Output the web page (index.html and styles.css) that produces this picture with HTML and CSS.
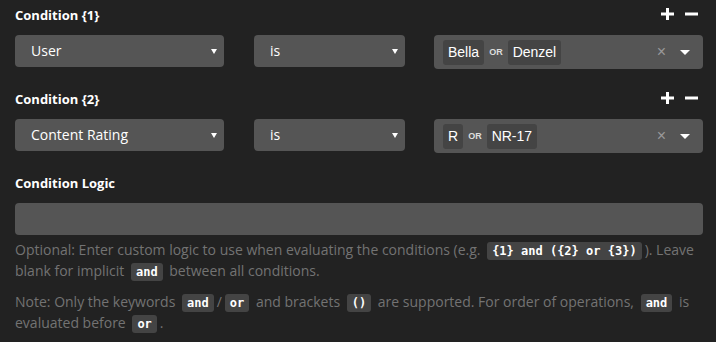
FILE: index.html
```html
<!DOCTYPE html>
<html lang="en">
<head>
    <meta charset="UTF-8">
    <title>Notification Conditions</title>
    <link rel="stylesheet" href="styles.css">
</head>
<body>
    <div class="conditions">
        <div class="condition">
            <div class="condition-header">
                <label>Condition {1}</label>
                <div class="condition-actions">
                    <svg class="icon" viewBox="0 0 13 12"><path d="M5 0h3v4.5h5v3H8V12H5V7.5H0v-3h5z"/></svg>
                    <svg class="icon" viewBox="0 0 13 12"><path d="M0 4.5h13v3H0z"/></svg>
                </div>
            </div>
            <div class="condition-fields">
                <div class="select-box">User<span class="caret"></span></div>
                <div class="select-box">is<span class="caret"></span></div>
                <div class="multi-select">
                    <span class="token">Bella</span>
                    <span class="token-or">OR</span>
                    <span class="token">Denzel</span>
                    <span class="clear">&times;</span>
                    <span class="arrow"></span>
                </div>
            </div>
        </div>
        <div class="condition">
            <div class="condition-header">
                <label>Condition {2}</label>
                <div class="condition-actions">
                    <svg class="icon" viewBox="0 0 13 12"><path d="M5 0h3v4.5h5v3H8V12H5V7.5H0v-3h5z"/></svg>
                    <svg class="icon" viewBox="0 0 13 12"><path d="M0 4.5h13v3H0z"/></svg>
                </div>
            </div>
            <div class="condition-fields">
                <div class="select-box">Content Rating<span class="caret"></span></div>
                <div class="select-box">is<span class="caret"></span></div>
                <div class="multi-select">
                    <span class="token">R</span>
                    <span class="token-or">OR</span>
                    <span class="token">NR-17</span>
                    <span class="clear">&times;</span>
                    <span class="arrow"></span>
                </div>
            </div>
        </div>
        <div class="logic">
            <div class="condition-header">
                <label>Condition Logic</label>
            </div>
            <div class="text-input"></div>
            <p class="help-block">Optional: Enter custom logic to use when evaluating the conditions (e.g. <code>{1} and ({2} or {3})</code>). Leave blank for implicit <code>and</code> between all conditions.</p>
            <p class="help-block">Note: Only the keywords <code>and</code>/<code>or</code> and brackets <code>()</code> are supported. For order of operations, <code>and</code> is evaluated before <code>or</code>.</p>
        </div>
    </div>
</body>
</html>
```

FILE: styles.css
```css
body {
    margin: 0;
    background-color: #222;
    color: #eee;
    font-family: "Open Sans", sans-serif;
    font-size: 13px;
}
.conditions {
    padding: 6px 13px 0 15px;
}
.condition {
    margin-bottom: 21px;
}
.condition-header {
    display: flex;
    justify-content: space-between;
    align-items: center;
    height: 18px;
    margin-bottom: 11px;
}
.condition-header label {
    font-weight: bold;
    color: #fff;
    line-height: 18px;
}
.condition-actions {
    display: flex;
    gap: 11px;
    padding-right: 5px;
    margin-top: -3px;
}
.icon {
    width: 13px;
    height: 12px;
    fill: #fff;
}
.condition-fields {
    display: grid;
    grid-template-columns: 209px 151px 1fr;
    column-gap: 30px;
    align-items: start;
}
.select-box {
    position: relative;
    height: 32px;
    line-height: 32px;
    padding-left: 16px;
    background: #555;
    border-radius: 4px;
    color: #fff;
    font-size: 14px;
}
.caret {
    position: absolute;
    right: 7px;
    top: 14px;
    border-left: 3px solid transparent;
    border-right: 3px solid transparent;
    border-top: 5px solid #fff;
}
.multi-select {
    display: flex;
    align-items: center;
    height: 34px;
    margin-left: -1px;
    padding-left: 9px;
    background: #555;
    border-radius: 4px;
    font-family: "Liberation Sans", Arial, sans-serif;
}
.token {
    background: #444;
    color: #fff;
    font-size: 14px;
    line-height: 25px;
    padding: 0 5px;
    border-radius: 3px;
}
.token-or {
    color: #ddd;
    font-size: 9px;
    font-weight: bold;
    margin: 0 5px;
}
.clear {
    margin-left: auto;
    color: #999;
    font-size: 16px;
    font-weight: 300;
}
.arrow {
    margin: 0 13px 0 14px;
    border-left: 5px solid transparent;
    border-right: 5px solid transparent;
    border-top: 5px solid #fff;
}
.text-input {
    height: 32px;
    background: #555;
    border-radius: 4px;
}
.help-block {
    margin: 5px 0 10px;
    color: #737373;
    font-size: 14px;
    line-height: 20px;
}
code {
    font-family: "DejaVu Sans Mono", "Liberation Mono", monospace;
    font-size: 12px;
    font-weight: bold;
    color: #fff;
    background: #444;
    padding: 2px 5px;
    border-radius: 3px;
    margin: 0 3px;
}
```
